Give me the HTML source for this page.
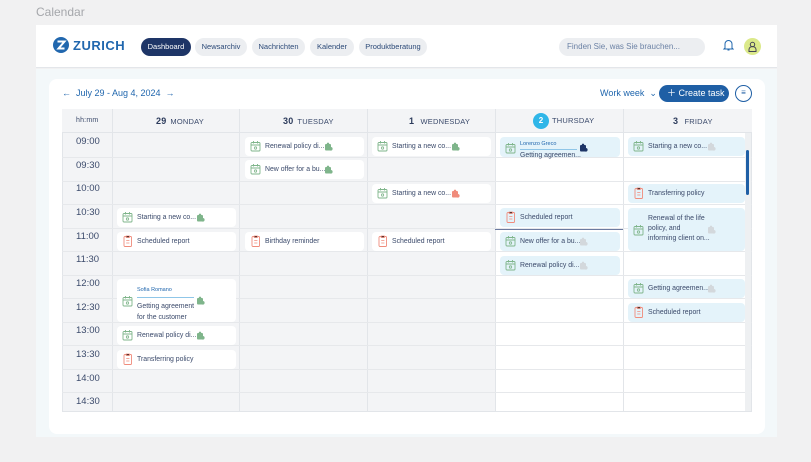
<!DOCTYPE html>
<html><head><meta charset="utf-8"><style>
*{box-sizing:border-box;margin:0;padding:0}
body{width:811px;height:462px;background:#f1f1f2;font-family:"Liberation Sans",sans-serif;position:relative;overflow:hidden;color:#3b4a6b}
.abs{position:absolute}
.title{left:36px;top:5px;font-size:12px;color:#a5a7ab}
.hdr{left:36px;top:25px;width:741px;height:43px;background:#fff;border-bottom:1px solid #e3e6ea}
.pill{position:absolute;top:13px;height:18px;border-radius:9px;background:#eceef1;color:#2c4a78;font-size:7.5px;line-height:18px;text-align:center}
.main{left:36px;top:69px;width:741px;height:368px;background:#f3f8fa}
.card{left:49px;top:79px;width:716px;height:355px;background:#fff;border-radius:8px}
.grid{left:62px;top:109px;width:690px;height:303px;border:1px solid #e2e5e9;background:#fff}
.hrow{left:62px;top:109px;width:690px;height:24px;background:#f3f4f6;border-bottom:1px solid #e2e5e9}
.vl{position:absolute;top:109px;width:1px;height:303px;background:#e2e5e9}
.hl{position:absolute;height:1px;background:#e6e8eb}
.tl{position:absolute;left:76px;font-size:9.5px;color:#3b4a6b}
.dh{position:absolute;top:109px;height:24px;line-height:24px;font-size:7.5px;color:#3b4a6b;letter-spacing:.2px}
.dh b{font-size:9px;margin-right:4px;color:#2c3b5c}
.ev{position:absolute;height:19px;border-radius:4px;background:#fff;font-size:6.9px;color:#3b4a6b;line-height:19px;padding-left:20px;white-space:nowrap}
.ev.b{background:#e4f3fa}
.ev svg.i{position:absolute;left:5px;top:3px}
.ev .p{position:absolute;top:5px}
</style></head><body>
<div class="abs title">Calendar</div>
<div class="abs hdr">
 <svg class="abs" style="left:17px;top:12px" width="16" height="16" viewBox="0 0 16 16"><circle cx="8" cy="8" r="8" fill="#2167ae"/><path d="M4.5 4.5h7l-6 7h6" stroke="#fff" stroke-width="2" fill="none"/></svg>
 <div class="abs" style="left:37px;top:13px;font-size:13px;font-weight:bold;color:#2167ae;letter-spacing:.5px">ZURICH</div>
 <div class="pill" style="left:105px;width:50px;background:#1e3567;color:#fff">Dashboard</div>
 <div class="pill" style="left:159px;width:52px">Newsarchiv</div>
 <div class="pill" style="left:216px;width:53px">Nachrichten</div>
 <div class="pill" style="left:274px;width:44px">Kalender</div>
 <div class="pill" style="left:323px;width:68px">Produktberatung</div>
 <div class="pill" style="left:523px;width:146px;text-align:left;padding-left:8px;color:#6c82a5;font-size:8px">Finden Sie, was Sie brauchen...</div>
 <svg class="abs" style="left:687px;top:14px" width="11" height="12" viewBox="0 0 11 12"><path d="M2 9V5a3.5 3.5 0 0 1 7 0v4l1 1H1z M4.5 11h2" stroke="#2167ae" fill="none" stroke-width="1"/></svg>
 <div class="abs" style="left:708px;top:13px;width:17px;height:17px;border-radius:50%;background:#dbe98a"></div>
 <svg class="abs" style="left:711px;top:16px" width="11" height="11" viewBox="0 0 11 11"><circle cx="5.5" cy="3.5" r="2.2" stroke="#445" fill="none"/><path d="M2 10.5v-2a3.5 3 0 0 1 7 0v2z" stroke="#445" fill="none"/></svg>
</div>
<div class="abs main"></div>
<div class="abs card"></div>
<div class="abs" style="left:62px;top:88px;font-size:9px;color:#2167ae">←&nbsp; July 29 - Aug 4, 2024 &nbsp;→</div>
<div class="abs" style="left:600px;top:88px;font-size:9px;color:#2167ae">Work week &nbsp;⌄</div>
<div class="abs" style="left:659px;top:85px;width:70px;height:17px;border-radius:9px;background:#1f5fa5;color:#fff;font-size:9px;line-height:17px;padding-left:8px">＋ Create task</div>
<div class="abs" style="left:735px;top:85px;width:17px;height:17px;border-radius:50%;border:1.3px solid #1f5fa5;font-size:8px;line-height:14px;text-align:center;color:#1f5fa5">≡</div>
<div class="abs grid"></div>
<div class="abs" style="left:113px;top:133px;width:382px;height:278px;background:#f3f4f6"></div>
<div class="abs" style="left:63px;top:133px;width:49px;height:278px;background:#f3f4f6"></div>
<div class="abs hrow"></div>
<div class="vl" style="left:112px"></div><div class="vl" style="left:239px"></div><div class="vl" style="left:367px"></div><div class="vl" style="left:495px"></div><div class="vl" style="left:623px"></div>
<div class="hl" style="left:62px;top:157px;width:690px"></div>
<div class="hl" style="left:62px;top:181px;width:690px"></div>
<div class="hl" style="left:62px;top:204px;width:690px"></div>
<div class="hl" style="left:62px;top:228px;width:690px"></div>
<div class="hl" style="left:62px;top:251px;width:690px"></div>
<div class="hl" style="left:62px;top:275px;width:690px"></div>
<div class="hl" style="left:62px;top:298px;width:690px"></div>
<div class="hl" style="left:62px;top:322px;width:690px"></div>
<div class="hl" style="left:62px;top:345px;width:690px"></div>
<div class="hl" style="left:62px;top:369px;width:690px"></div>
<div class="hl" style="left:62px;top:392px;width:690px"></div>
<div class="dh" style="left:76px;font-size:7px">hh:mm</div>
<div class="dh" style="left:156px"><b>29</b>MONDAY</div>
<div class="dh" style="left:283px"><b>30</b>TUESDAY</div>
<div class="dh" style="left:409px"><b>1</b>&nbsp;WEDNESDAY</div>
<div class="abs" style="left:533px;top:113px;width:16px;height:16px;border-radius:50%;background:#2fb6e8;color:#fff;font-size:8px;font-weight:bold;line-height:16px;text-align:center">2</div>
<div class="dh" style="left:552px">THURSDAY</div>
<div class="dh" style="left:673px"><b>3</b>&nbsp;FRIDAY</div>
<div class="tl" style="top:136px">09:00</div><div class="tl" style="top:160px">09:30</div><div class="tl" style="top:183px">10:00</div><div class="tl" style="top:207px">10:30</div><div class="tl" style="top:231px">11:00</div><div class="tl" style="top:254px">11:30</div><div class="tl" style="top:278px">12:00</div><div class="tl" style="top:302px">12:30</div><div class="tl" style="top:325px">13:00</div><div class="tl" style="top:349px">13:30</div><div class="tl" style="top:373px">14:00</div><div class="tl" style="top:396px">14:30</div>
<svg width="0" height="0" style="position:absolute"><defs>
<symbol id="cal" viewBox="0 0 11 12"><rect x="1" y="2.5" width="9" height="8.5" rx="1" fill="none" stroke="#7fb58b" stroke-width=".9"/><path d="M1 5h9M3.5 1v2.5M7.5 1v2.5" stroke="#7fb58b" stroke-width=".9"/><circle cx="5.5" cy="8" r="1.2" fill="none" stroke="#7fb58b" stroke-width=".8"/></symbol>
<symbol id="clip" viewBox="0 0 11 12"><rect x="2" y="1.5" width="7.5" height="10" rx="1" fill="none" stroke="#f08c7c" stroke-width=".9"/><path d="M4.2 1h3.2v1.5H4.2zM4.2 5.5h3.2M4.2 8h3.2" stroke="#f08c7c" stroke-width=".8"/></symbol>
<symbol id="per" viewBox="0 0 9 9"><rect x="1" y="2" width="6" height="6.5" rx="1" fill="currentColor"/><circle cx="4" cy="1.8" r="1.2" fill="currentColor"/><circle cx="6.8" cy="6.8" r="1.8" fill="currentColor"/></symbol>
</defs></svg>
<!-- Monday -->
<div class="ev" style="left:117px;top:208px;width:119px"><svg class="i" width="11" height="12"><use href="#cal"/></svg>Starting a new co...<svg class="p" style="left:79px;color:#7fb58b" width="9" height="9"><use href="#per"/></svg></div>
<div class="ev" style="left:117px;top:232px;width:119px"><svg class="i" width="11" height="12"><use href="#clip"/></svg>Scheduled report</div>
<div class="ev" style="left:117px;top:279px;width:119px;height:43px;line-height:11px;padding-top:6px"><div style="font-size:5.5px;color:#2167ae;border-bottom:1px solid #8fc6e8;width:57px;margin-bottom:3px;padding-bottom:1px">Sofia Romano</div>Getting agreement<br>for the customer<svg class="i" style="top:16px" width="11" height="12"><use href="#cal"/></svg><svg class="p" style="left:79px;top:17px;color:#7fb58b" width="9" height="9"><use href="#per"/></svg></div>
<div class="ev" style="left:117px;top:326px;width:119px"><svg class="i" width="11" height="12"><use href="#cal"/></svg>Renewal policy di...<svg class="p" style="left:79px;color:#7fb58b" width="9" height="9"><use href="#per"/></svg></div>
<div class="ev" style="left:117px;top:350px;width:119px"><svg class="i" width="11" height="12"><use href="#clip"/></svg>Transferring policy</div>
<!-- Tuesday -->
<div class="ev" style="left:245px;top:137px;width:119px"><svg class="i" width="11" height="12"><use href="#cal"/></svg>Renewal policy di...<svg class="p" style="left:79px;color:#7fb58b" width="9" height="9"><use href="#per"/></svg></div>
<div class="ev" style="left:245px;top:160px;width:119px"><svg class="i" width="11" height="12"><use href="#cal"/></svg>New offer for a bu...<svg class="p" style="left:79px;color:#7fb58b" width="9" height="9"><use href="#per"/></svg></div>
<div class="ev" style="left:245px;top:232px;width:119px"><svg class="i" width="11" height="12"><use href="#clip"/></svg>Birthday reminder</div>
<!-- Wednesday -->
<div class="ev" style="left:372px;top:137px;width:119px"><svg class="i" width="11" height="12"><use href="#cal"/></svg>Starting a new co...<svg class="p" style="left:79px;color:#7fb58b" width="9" height="9"><use href="#per"/></svg></div>
<div class="ev" style="left:372px;top:184px;width:119px"><svg class="i" width="11" height="12"><use href="#cal"/></svg>Starting a new co...<svg class="p" style="left:79px;color:#f08c7c" width="9" height="9"><use href="#per"/></svg></div>
<div class="ev" style="left:372px;top:232px;width:119px"><svg class="i" width="11" height="12"><use href="#clip"/></svg>Scheduled report</div>
<!-- Thursday -->
<div class="ev b" style="left:500px;top:137px;width:120px;height:20px;line-height:10px;padding-top:2px"><div style="font-size:5.5px;color:#2167ae;border-bottom:1px solid #8fc6e8;width:57px;margin-bottom:1px">Lorenzo Greco</div>Getting agreemen...<svg class="i" style="top:5px" width="11" height="12"><use href="#cal"/></svg><svg class="p" style="left:79px;top:6px;color:#1e3567" width="9" height="9"><use href="#per"/></svg></div>
<div class="ev b" style="left:500px;top:208px;width:120px"><svg class="i" width="11" height="12"><use href="#clip"/></svg>Scheduled report</div>
<div class="abs" style="left:495px;top:229px;width:128px;height:1px;background:#6c7aa0"></div>
<div class="ev b" style="left:500px;top:232px;width:120px"><svg class="i" width="11" height="12"><use href="#cal"/></svg>New offer for a bu...<svg class="p" style="left:79px;color:#d3d8dc" width="9" height="9"><use href="#per"/></svg></div>
<div class="ev b" style="left:500px;top:256px;width:120px"><svg class="i" width="11" height="12"><use href="#cal"/></svg>Renewal policy di...<svg class="p" style="left:79px;color:#d3d8dc" width="9" height="9"><use href="#per"/></svg></div>
<!-- Friday -->
<div class="ev b" style="left:628px;top:137px;width:117px"><svg class="i" width="11" height="12"><use href="#cal"/></svg>Starting a new co...<svg class="p" style="left:79px;color:#d3d8dc" width="9" height="9"><use href="#per"/></svg></div>
<div class="ev b" style="left:628px;top:184px;width:117px"><svg class="i" width="11" height="12"><use href="#clip"/></svg>Transferring policy</div>
<div class="ev b" style="left:628px;top:208px;width:117px;height:43px;line-height:10px;padding-top:6px">Renewal of the life<br>policy, and<br>informing client on...<svg class="i" style="top:16px" width="11" height="12"><use href="#cal"/></svg><svg class="p" style="left:79px;top:17px;color:#d3d8dc" width="9" height="9"><use href="#per"/></svg></div>
<div class="ev b" style="left:628px;top:279px;width:117px"><svg class="i" width="11" height="12"><use href="#cal"/></svg>Getting agreemen...<svg class="p" style="left:79px;color:#d3d8dc" width="9" height="9"><use href="#per"/></svg></div>
<div class="ev b" style="left:628px;top:303px;width:117px"><svg class="i" width="11" height="12"><use href="#clip"/></svg>Scheduled report</div>
<div class="abs" style="left:745px;top:133px;width:6px;height:278px;background:#eef0f2"></div>
<div class="abs" style="left:746px;top:150px;width:3px;height:45px;background:#1f5fa5;border-radius:2px"></div>
</body></html>
